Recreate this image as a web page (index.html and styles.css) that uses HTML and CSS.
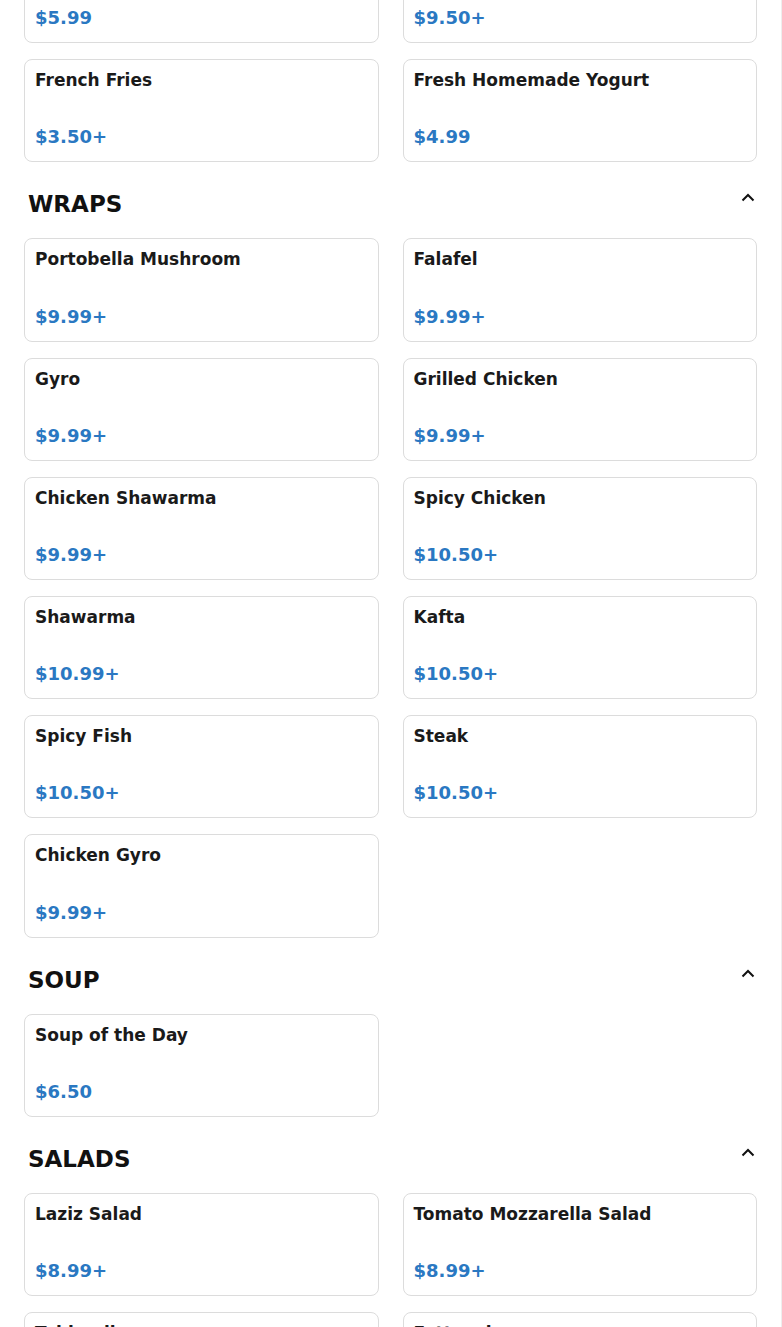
FILE: index.html
```html
<!DOCTYPE html>
<html lang="en">
<head>
    <meta charset="UTF-8">
    <meta name="viewport" content="width=device-width, initial-scale=1.0">
    <title>Menu</title>
    <link rel="stylesheet" href="styles.css">
</head>
<body>
    <div class="menu">
        <!-- sides, scrolled partly out of view -->
        <div class="items items-first">
            <div class="item"><span class="item-name">Hummus</span><span class="item-price">$5.99</span></div>
            <div class="item"><span class="item-name">Rice Pilaf</span><span class="item-price">$9.50+</span></div>
            <div class="item"><span class="item-name">French Fries</span><span class="item-price">$3.50+</span></div>
            <div class="item"><span class="item-name">Fresh Homemade Yogurt</span><span class="item-price">$4.99</span></div>
        </div>

        <div class="section-head">
            <h2>WRAPS</h2>
            <svg class="chevron" width="16" height="16" viewBox="0 0 16 16"><path d="M2.5 10.5 L8 5 L13.5 10.5" fill="none" stroke="#111" stroke-width="2"/></svg>
        </div>
        <div class="items">
            <div class="item"><span class="item-name">Portobella Mushroom</span><span class="item-price">$9.99+</span></div>
            <div class="item"><span class="item-name">Falafel</span><span class="item-price">$9.99+</span></div>
            <div class="item"><span class="item-name">Gyro</span><span class="item-price">$9.99+</span></div>
            <div class="item"><span class="item-name">Grilled Chicken</span><span class="item-price">$9.99+</span></div>
            <div class="item"><span class="item-name">Chicken Shawarma</span><span class="item-price">$9.99+</span></div>
            <div class="item"><span class="item-name">Spicy Chicken</span><span class="item-price">$10.50+</span></div>
            <div class="item"><span class="item-name">Shawarma</span><span class="item-price">$10.99+</span></div>
            <div class="item"><span class="item-name">Kafta</span><span class="item-price">$10.50+</span></div>
            <div class="item"><span class="item-name">Spicy Fish</span><span class="item-price">$10.50+</span></div>
            <div class="item"><span class="item-name">Steak</span><span class="item-price">$10.50+</span></div>
            <div class="item"><span class="item-name">Chicken Gyro</span><span class="item-price">$9.99+</span></div>
        </div>

        <div class="section-head">
            <h2>SOUP</h2>
            <svg class="chevron" width="16" height="16" viewBox="0 0 16 16"><path d="M2.5 10.5 L8 5 L13.5 10.5" fill="none" stroke="#111" stroke-width="2"/></svg>
        </div>
        <div class="items">
            <div class="item"><span class="item-name">Soup of the Day</span><span class="item-price">$6.50</span></div>
        </div>

        <div class="section-head">
            <h2>SALADS</h2>
            <svg class="chevron" width="16" height="16" viewBox="0 0 16 16"><path d="M2.5 10.5 L8 5 L13.5 10.5" fill="none" stroke="#111" stroke-width="2"/></svg>
        </div>
        <div class="items">
            <div class="item"><span class="item-name">Laziz Salad</span><span class="item-price">$8.99+</span></div>
            <div class="item"><span class="item-name">Tomato Mozzarella Salad</span><span class="item-price">$8.99+</span></div>
            <div class="item"><span class="item-name">Tabbouli</span><span class="item-price">$8.99+</span></div>
            <div class="item"><span class="item-name">Fattoush</span><span class="item-price">$8.99+</span></div>
        </div>
    </div>
</body>
</html>
```

FILE: styles.css
```css
html, body {
    margin: 0;
    background: #fff;
}

body {
    font-family: "DejaVu Sans", "Noto Sans", sans-serif;
    color: #1c1c1c;
    overflow: hidden;
    height: 1327px;
}

.menu {
    border-right: 1px solid #eeeeee;
    padding: 0 24px 40px 24px;
    min-height: 1327px;
}

.items {
    display: grid;
    grid-template-columns: 1fr 1fr;
    column-gap: 24px;
    row-gap: 16px;
}

.items-first {
    margin-top: -60px;
}

.item {
    box-sizing: border-box;
    height: 103.2px;
    display: flex;
    flex-direction: column;
    justify-content: space-between;
    padding: 10px 10px 14px 10px;
    border: 1px solid #dcdcdc;
    border-radius: 8px;
    background: #fff;
}

.item-name {
    font-size: 17px;
    font-weight: bold;
    line-height: 21px;
    color: #1a1a1a;
}

.item-price {
    font-size: 18px;
    font-weight: bold;
    line-height: 21px;
    color: #2a78c2;
}

.section-head {
    display: flex;
    justify-content: space-between;
    align-items: flex-start;
    margin: 29px 0 20px 0;
    padding: 0 1px 0 4px;
}

.section-head h2 {
    margin: 0;
    font-size: 23px;
    line-height: 27px;
    font-weight: bold;
    color: #111;
}

.chevron {
    display: block;
    margin-top: -1px;
}
```
